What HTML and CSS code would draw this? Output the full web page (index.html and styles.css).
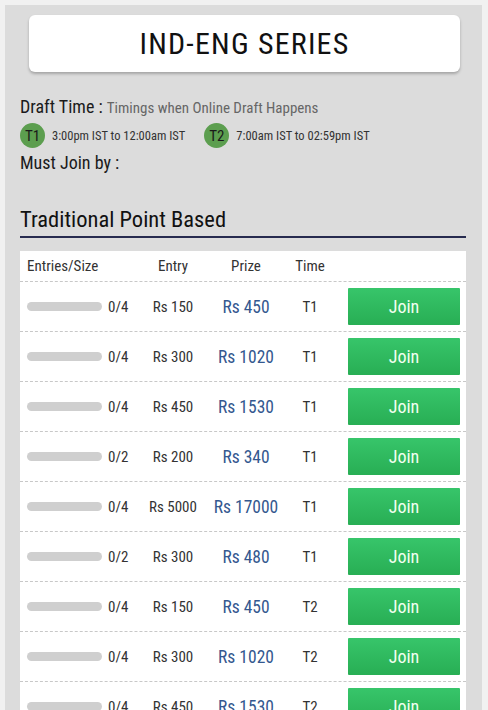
FILE: index.html
```html
<!DOCTYPE html>
<html>
<head>
  <meta charset="UTF-8">
  <meta name="viewport" content="width=device-width, initial-scale=1.0">
  <link rel="stylesheet" href="styles.css">
  <title>IND-ENG Series</title>
</head>
<body>
  <div class="panel">
    <div class="title-card">
      <h1>IND-ENG SERIES</h1>
    </div>

    <div class="draft">
      <p class="draft-line">Draft Time : <span class="muted">Timings when Online Draft Happens</span></p>
      <div class="slots">
        <span class="slot"><span class="badge">T1</span>3:00pm IST to 12:00am IST</span>
        <span class="slot"><span class="badge">T2</span>7:00am IST to 02:59pm IST</span>
      </div>
      <p class="draft-line">Must Join by :</p>
    </div>

    <h2 class="section-title">Traditional Point Based</h2>

    <div class="contests">
      <div class="row head">
        <span class="c-size">Entries/Size</span>
        <span class="c-mid">Entry</span>
        <span class="c-mid">Prize</span>
        <span class="c-mid">Time</span>
        <span></span>
      </div>
      <div id="rows"></div>
    </div>
  </div>

  <script>
    // lista de contests
    var contests = [
      ['0/4', 150, 450, 'T1'],
      ['0/4', 300, 1020, 'T1'],
      ['0/4', 450, 1530, 'T1'],
      ['0/2', 200, 340, 'T1'],
      ['0/4', 5000, 17000, 'T1'],
      ['0/2', 300, 480, 'T1'],
      ['0/4', 150, 450, 'T2'],
      ['0/4', 300, 1020, 'T2'],
      ['0/4', 450, 1530, 'T2']
    ];

    var html = '';
    contests.forEach(function(c) {
      html += '<div class="row">' +
        '<span class="c-size"><span class="bar"></span>' + c[0] + '</span>' +
        '<span class="c-mid">Rs ' + c[1] + '</span>' +
        '<span class="c-mid prize">Rs ' + c[2] + '</span>' +
        '<span class="c-mid">' + c[3] + '</span>' +
        '<span class="c-btn"><button class="btn-join">Join</button></span>' +
        '</div>';
    });
    document.getElementById('rows').innerHTML = html;
  </script>
</body>
</html>
```

FILE: styles.css
```css
body {
  font-family: "Roboto Condensed", "Liberation Sans Narrow", "DejaVu Sans Condensed", Roboto, sans-serif;
  background-color: #f1f1f1;
  margin: 0;
  padding: 0;
  color: #222;
}

.panel {
  background-color: #dcdcdc;
  margin: 5px 6px 0 5px;
  padding: 10px 16px 0 15px;
  height: 705px;
  overflow: hidden;
}

.title-card {
  background-color: #fff;
  border-radius: 6px;
  box-shadow: 0 2px 3px rgba(0, 0, 0, 0.25);
  margin: 0 6px 0 9px;
  height: 57px;
  display: flex;
  align-items: center;
  justify-content: center;
}

.title-card h1 {
  font-size: 30px;
  font-weight: 400;
  letter-spacing: 1.2px;
  color: #111;
  margin: 0;
}

.draft {
  margin-top: 24px;
}

.draft-line {
  font-size: 18px;
  line-height: 22px;
  margin: 0;
  color: #1a1a1a;
}

.draft-line .muted {
  font-size: 15px;
  color: #666;
}

.slots {
  display: flex;
  gap: 19px;
  margin: 4px 0 4px 0;
  font-size: 12.5px;
  color: #333;
}

.slot {
  display: flex;
  align-items: center;
  gap: 7px;
}

.badge {
  width: 25px;
  height: 25px;
  border-radius: 50%;
  background-color: #5c9e4f;
  color: #1a1a1a;
  font-size: 15px;
  display: flex;
  align-items: center;
  justify-content: center;
}

.section-title {
  font-size: 22.5px;
  font-weight: 400;
  color: #111;
  margin: 32px 0 0 0;
  padding-bottom: 3px;
  line-height: 27px;
  border-bottom: 2px solid #272b4f;
}

.contests {
  background-color: #fff;
  margin-top: 13px;
}

.row {
  display: grid;
  grid-template-columns: 123px 60px 86px 42px 1fr;
  align-items: center;
  height: 50px;
  border-top: 1px dashed #c8c8c8;
  font-size: 15px;
  color: #333;
  box-sizing: border-box;
}

.row.head {
  height: 30px;
  border-top: none;
}

.c-size {
  display: flex;
  align-items: center;
  padding-left: 7px;
}

.c-mid {
  text-align: center;
}

.bar {
  width: 75px;
  height: 9px;
  border-radius: 5px;
  background-color: #cfcfcf;
  margin-right: 6px;
}

.prize {
  font-size: 17.5px;
  color: #34588f;
}

.c-btn {
  display: flex;
  justify-content: flex-end;
  padding-right: 6px;
}

.btn-join {
  width: 112px;
  height: 37px;
  border: none;
  border-radius: 1px;
  background: linear-gradient(#37c56a, #28ae54);
  color: #f2fff0;
  font-family: inherit;
  font-size: 18px;
  cursor: pointer;
}
```
